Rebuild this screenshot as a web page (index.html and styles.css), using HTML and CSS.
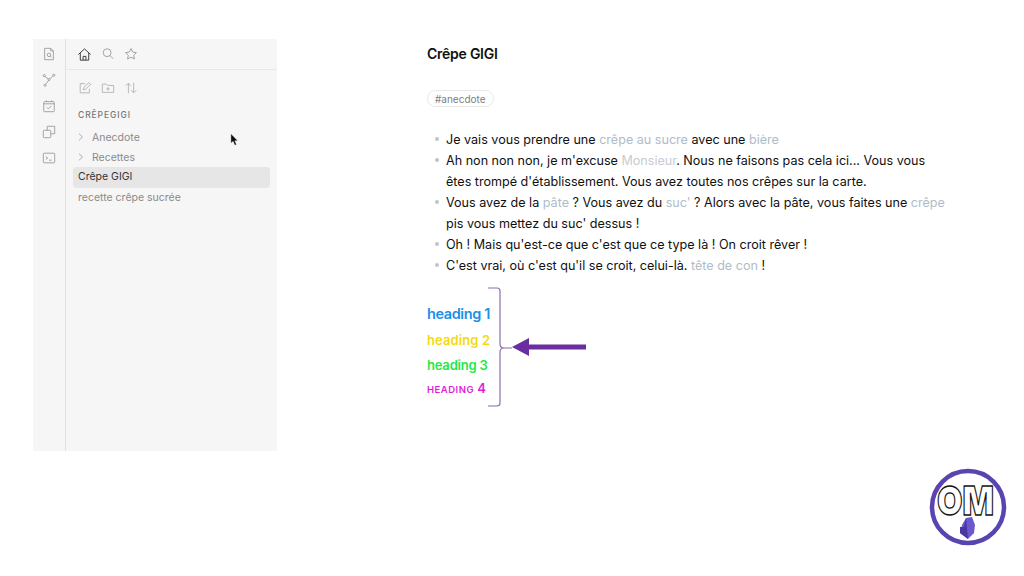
FILE: index.html

```html
<!DOCTYPE html>
<html>

<head>
<title>Crêpe GIGI</title>
<meta charset="UTF-8">
<link rel="stylesheet" href="styles.css">
</head>

<body>
  <div id="page">
    <div id="sidebar">
      <div id="ribbon">
        <svg class="ico" viewBox="0 0 16 16"><path d="M3 1.500h7l3 3v10H3z M10 1.500v3h3"/><circle cx="8" cy="9" r="2"/><path d="M9.500 10.500l1.400 1.400"/></svg>
        <svg class="ico" viewBox="0 0 16 16"><circle cx="2.500" cy="3" r="1.200"/><circle cx="13.500" cy="2.500" r="1.200"/><circle cx="3.500" cy="14" r="1.200"/><circle cx="8" cy="7.500" r="1.200"/><path d="M3.400 3.900l3.700 2.800M12.500 3.300L9 6.700M7.400 8.600l-3.200 4.400"/></svg>
        <svg class="ico" viewBox="0 0 16 16"><rect x="2" y="3" width="12" height="11.500" rx="1"/><path d="M2 5.500h12M5 1.500V3M11 1.500V3M5.500 9.500l1.800 1.800 3.200-3.300"/></svg>
        <svg class="ico" viewBox="0 0 16 16"><rect x="1.500" y="6" width="8.500" height="8.500" rx="1"/><path d="M6 6V1.500h8.500V10H10"/></svg>
        <svg class="ico" viewBox="0 0 16 16"><rect x="1.500" y="2.500" width="13" height="11" rx="1"/><path d="M4.500 6.500L6.500 8l-2 1.500M8 10.500h3"/></svg>
      </div>
      <div id="panel">
        <div id="tabs">
          <svg class="ico dark" viewBox="0 0 16 16"><path d="M1.500 8L8 2l6.500 6M3.500 6.500V14h9V6.500"/><path d="M6.500 14v-4h3v4"/></svg>
          <svg class="ico" viewBox="0 0 16 16"><circle cx="7" cy="6.500" r="4.500"/><path d="M10.300 9.800l3.700 3.700"/></svg>
          <svg class="ico" viewBox="0 0 16 16"><path d="M8 1.800l1.900 4 4.300.6-3.100 3 .8 4.300L8 11.600l-3.900 2.100.8-4.300-3.100-3 4.300-.6z"/></svg>
        </div>
        <div id="tools">
          <svg class="ico light" viewBox="0 0 16 16"><path d="M13 9v4.500H2.500V3H8"/><path d="M6 10l.5-2.500L12.500 1.800l2 2L8.500 9.500z"/></svg>
          <svg class="ico light" viewBox="0 0 16 16"><path d="M1.500 3.500h4.500l1.500 1.500h7v8h-13z"/><path d="M8 7v4M6 9h4"/></svg>
          <svg class="ico light" viewBox="0 0 16 16"><path d="M5 14V2.500M2 5.500l3-3 3 3M11 2v11.500M8 10.500l3 3 3-3"/></svg>
        </div>
        <div id="vault">CRÊPEGIGI</div>
        <div class="row folder"><svg class="chev" viewBox="0 0 6 8"><path d="M1 .7L4.500 4 1 7.300"/></svg>Anecdote</div>
        <div class="row"><svg class="chev" viewBox="0 0 6 8"><path d="M1 .7L4.500 4 1 7.300"/></svg>Recettes</div>
        <div class="row file active">Crêpe GIGI</div>
        <div class="row file">recette crêpe sucrée</div>
      </div>
      <svg id="cursor" viewBox="0 0 10 14"><path d="M1 0v10.500l2.500-2 1.800 4.300 1.900-.8-1.800-4.200h3.200z"/></svg>
    </div>

    <div id="note">
      <div id="title">Crêpe GIGI</div>
      <span id="tag">#anecdote</span>
      <ul>
        <li>Je vais vous prendre une <a>crêpe au sucre</a> avec une <a>bière</a></li>
        <li>Ah non non non, je m'excuse <a class="pale">Monsieur</a>. Nous ne faisons pas cela ici... Vous vous êtes trompé d'établissement. Vous avez toutes nos crêpes sur la carte.</li>
        <li>Vous avez de la <a>pâte</a> ? Vous avez du <a>suc'</a> ? Alors avec la pâte, vous faites une <a>crêpe</a> pis vous mettez du suc' dessus !</li>
        <li>Oh ! Mais qu'est-ce que c'est que ce type là ! On croit rêver !</li>
        <li>C'est vrai, où c'est qu'il se croit, celui-là. <a>tête de con</a> !</li>
      </ul>
      <div id="headings">
        <div id="hlist">
          <div class="h1">heading 1</div>
          <div class="h2">heading 2</div>
          <div class="h3">heading 3</div>
          <div class="h4"><span>HEADING</span> 4</div>
        </div>
        <svg id="brace" viewBox="0 0 100 120">
          <path class="line" d="M0 1h9q3 0 3 3v53q0 4 4 4h8h-8q-4 0-4 4v51q0 3-3 3H0"/>
          <path class="fat" d="M38 60h60"/>
          <path class="head" d="M24 60l17-9v18z"/>
        </svg>
      </div>
    </div>
  </div>

  <svg id="logo" viewBox="0 0 80 80">
    <circle cx="40" cy="39" r="36" fill="#fff" stroke="#5a44b0" stroke-width="4.500"/>
    <text x="9" y="47" textLength="57" lengthAdjust="spacingAndGlyphs" class="om">OM</text>
    <path d="M38 50l6-1 3 8-1 8-6 6-8-6 2-8z" fill="#6a58cc"/>
    <path d="M38 50l-2 9-4 0-0 6 8 6z" fill="#4a36a0"/>
  </svg>
</body>
</html>
```

FILE: styles.css

```css
html,body { margin: 0px; padding: 0px; width: 100%; height: 100%; background-color: #fff;
  font-family: Inter, "Liberation Sans", Arial, sans-serif;
  font-size: 12px;
  overflow: hidden;
}

#page {
  display: flex;
  align-items: flex-start;
  padding: 39px 0 0 33px;
}

#sidebar {
  position: relative;
  display: flex;
  width: 244px;
  height: 412px;
  background: #f6f6f6;
  flex: none;
}

#ribbon {
  width: 33px;
  box-sizing: border-box;
  border-right: 1px solid #e2e2e2;
  display: flex;
  flex-direction: column;
  align-items: center;
  gap: 12px;
  padding-top: 8px;
  flex: none;
}

.ico {
  width: 14px;
  height: 14px;
  fill: none;
  stroke: #999;
  stroke-width: 1;
  flex: none;
}

.ico.dark { stroke: #333; width: 15px; height: 15px; }
.ico.light { stroke: #b0b0b0; }

#panel {
  flex: 1;
  min-width: 0;
}

#tabs {
  height: 30px;
  border-bottom: 1px solid #e8e8e8;
  display: flex;
  align-items: center;
  gap: 9px;
  padding-left: 11px;
}

#tools {
  display: flex;
  gap: 9px;
  padding: 11px 0 0 12px;
  height: 17px;
}

#vault {
  margin: 9px 0 0 12px;
  font-size: 8.5px;
  font-weight: 500;
  letter-spacing: 0.9px;
  color: #777;
  height: 17px;
  line-height: 17px;
}

.row {
  margin: 0 7px;
  height: 20px;
  line-height: 20px;
  font-size: 10.5px;
  color: #8a8a8a;
  padding-left: 5px;
  border-radius: 4px;
}

.folder { margin-top: 4px; }

.chev {
  width: 6px;
  height: 8px;
  margin-right: 8px;
  fill: none;
  stroke: #a5a5a5;
  stroke-width: 0.9;
}

.active {
  background: #e6e6e6;
  color: #333;
  height: 21px;
  line-height: 20px;
  margin-top: -1px;
}

#cursor {
  position: absolute;
  left: 197px;
  top: 94px;
  width: 9px;
  height: 14px;
  fill: #111;
  stroke: #fff;
  stroke-width: 0.4;
}

#note {
  margin-left: 150px;
  width: 520px;
  color: #111;
}

#title {
  font-size: 14px;
  font-weight: 600;
  line-height: 30px;
  letter-spacing: -0.25px;
}

#tag {
  display: inline-block;
  margin-top: 21px;
  padding: 0 7px;
  height: 17px;
  line-height: 16px;
  box-sizing: border-box;
  border: 1px solid #e8e8e8;
  border-radius: 9px;
  font-size: 10px;
  color: #808080;
}

ul {
  list-style: none;
  margin: 22px 0 0 0;
  padding: 0 0 0 19px;
}

li {
  position: relative;
  font-size: 12.58px;
  line-height: 21px;
}

li::before {
  content: "";
  position: absolute;
  left: -11px;
  top: 8px;
  width: 4px;
  height: 4px;
  border-radius: 50%;
  background: #c0c5ca;
}

li a { color: #b0bcc8; }
li a.pale { color: #c8ccd2; }

#headings {
  display: flex;
  align-items: flex-start;
  margin-top: 11px;
}

#hlist {
  width: 73px;
  padding-top: 17px;
  font-weight: 600;
  flex: none;
}

.h1 { color: #1b8fe8; font-size: 14.5px; height: 26px; line-height: 20px; letter-spacing: -0.4px; }
.h2 { color: #f5d90f; font-size: 13px; height: 25px; line-height: 20px; letter-spacing: 0.1px; }
.h3 { color: #1fe84a; font-size: 13px; height: 24px; line-height: 20px; letter-spacing: -0.2px; }
.h4 { color: #e01ed8; font-size: 13px; line-height: 18px; }
.h4 span { font-size: 9.5px; letter-spacing: 0.5px; }

#brace {
  width: 100px;
  height: 120px;
  margin-left: -12px;
  flex: none;
}

.line { fill: none; stroke: #8e6bb0; stroke-width: 1.2; }
.fat { fill: none; stroke: #6a2ea0; stroke-width: 5; }
.head { fill: #6a2ea0; }

#logo {
  position: absolute;
  left: 928px;
  top: 468px;
  width: 80px;
  height: 80px;
}

.om {
  font-size: 40px;
  font-weight: 900;
  fill: #fff;
  stroke: #111;
  stroke-width: 1.3;
  font-family: Inter, "Liberation Sans", sans-serif;
}
```
